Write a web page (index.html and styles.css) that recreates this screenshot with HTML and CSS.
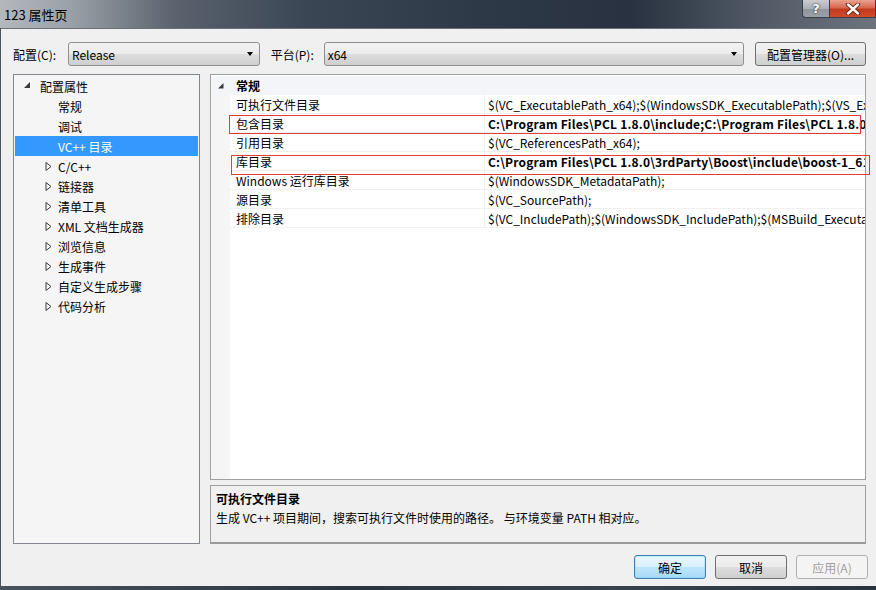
FILE: index.html
```html
<!DOCTYPE html>
<html lang="zh-CN">

<head>
    <meta charset="UTF-8">
    <title>123 属性页</title>
    <link rel="stylesheet" href="styles.css">
</head>

<body>
    <div class="window">
        <!-- Judul jendela -->
        <div class="titlebar">
            <span class="title">123 属性页</span>
            <div class="caption-btns">
                <div class="cap-btn help">?</div>
                <div class="cap-btn close">
                    <svg width="16" height="12" viewBox="0 0 16 12">
                        <path d="M3 1.5 L13 10.5 M13 1.5 L3 10.5" stroke="#5a1f14" stroke-width="4.2" stroke-linecap="round" />
                        <path d="M3 1.5 L13 10.5 M13 1.5 L3 10.5" stroke="#ffffff" stroke-width="2.4" stroke-linecap="round" />
                    </svg>
                </div>
            </div>
        </div>

        <div class="client">
            <div class="config-row">
                <span class="lbl lbl-config">配置(C):</span>
                <div class="combo combo-config">
                    <span>Release</span>
                    <span class="arrow"></span>
                </div>
                <span class="lbl lbl-platform">平台(P):</span>
                <div class="combo combo-platform">
                    <span>x64</span>
                    <span class="arrow"></span>
                </div>
                <button class="btn btn-manager">配置管理器(O)...</button>
            </div>

            <div class="main">
                <!-- Pohon navigasi -->
                <div class="tree">
                    <div class="node root">
                        <svg class="exp" width="7" height="7" viewBox="0 0 7 7"><polygon points="6,0 6,6 0,6" fill="#3c3c3c" /></svg>
                        <span>配置属性</span>
                    </div>
                    <div class="node child">常规</div>
                    <div class="node child">调试</div>
                    <div class="node child selected">VC++ 目录</div>
                    <div class="node child"><svg class="col" width="7" height="9" viewBox="0 0 7 9"><polygon points="1,0.5 6,4.5 1,8.5" fill="none" stroke="#3c3c3c" /></svg>C/C++</div>
                    <div class="node child"><svg class="col" width="7" height="9" viewBox="0 0 7 9"><polygon points="1,0.5 6,4.5 1,8.5" fill="none" stroke="#3c3c3c" /></svg>链接器</div>
                    <div class="node child"><svg class="col" width="7" height="9" viewBox="0 0 7 9"><polygon points="1,0.5 6,4.5 1,8.5" fill="none" stroke="#3c3c3c" /></svg>清单工具</div>
                    <div class="node child"><svg class="col" width="7" height="9" viewBox="0 0 7 9"><polygon points="1,0.5 6,4.5 1,8.5" fill="none" stroke="#3c3c3c" /></svg>XML 文档生成器</div>
                    <div class="node child"><svg class="col" width="7" height="9" viewBox="0 0 7 9"><polygon points="1,0.5 6,4.5 1,8.5" fill="none" stroke="#3c3c3c" /></svg>浏览信息</div>
                    <div class="node child"><svg class="col" width="7" height="9" viewBox="0 0 7 9"><polygon points="1,0.5 6,4.5 1,8.5" fill="none" stroke="#3c3c3c" /></svg>生成事件</div>
                    <div class="node child"><svg class="col" width="7" height="9" viewBox="0 0 7 9"><polygon points="1,0.5 6,4.5 1,8.5" fill="none" stroke="#3c3c3c" /></svg>自定义生成步骤</div>
                    <div class="node child"><svg class="col" width="7" height="9" viewBox="0 0 7 9"><polygon points="1,0.5 6,4.5 1,8.5" fill="none" stroke="#3c3c3c" /></svg>代码分析</div>
                </div>

                <div class="right">
                    <!-- Tabel properti -->
                    <div class="grid">
                        <div class="row category">
                            <div class="margin"><svg width="6" height="6" viewBox="0 0 6 6"><polygon points="5.5,0 5.5,5.5 0,5.5" fill="#3c3c3c" /></svg></div>
                            <div class="cat-name">常规</div>
                        </div>
                        <div class="row">
                            <div class="margin"></div>
                            <div class="name">可执行文件目录</div>
                            <div class="value">$(VC_ExecutablePath_x64);$(WindowsSDK_ExecutablePath);$(VS_ExecutablePath);$(MSBuild_ExecutablePath);$(SystemRoot)\SysWow64;$(FxCopDir);$(PATH);</div>
                        </div>
                        <div class="row">
                            <div class="margin"></div>
                            <div class="name">包含目录</div>
                            <div class="value bold">C:\Program Files\PCL 1.8.0\include;C:\Program Files\PCL 1.8.0\3rdParty\Eigen\eigen3;$(IncludePath)</div>
                        </div>
                        <div class="row">
                            <div class="margin"></div>
                            <div class="name">引用目录</div>
                            <div class="value">$(VC_ReferencesPath_x64);</div>
                        </div>
                        <div class="row">
                            <div class="margin"></div>
                            <div class="name">库目录</div>
                            <div class="value bold">C:\Program Files\PCL 1.8.0\3rdParty\Boost\include\boost-1_61;$(LibraryPath)</div>
                        </div>
                        <div class="row">
                            <div class="margin"></div>
                            <div class="name">Windows 运行库目录</div>
                            <div class="value">$(WindowsSDK_MetadataPath);</div>
                        </div>
                        <div class="row">
                            <div class="margin"></div>
                            <div class="name">源目录</div>
                            <div class="value">$(VC_SourcePath);</div>
                        </div>
                        <div class="row">
                            <div class="margin"></div>
                            <div class="name">排除目录</div>
                            <div class="value">$(VC_IncludePath);$(WindowsSDK_IncludePath);$(MSBuild_ExecutablePath);$(VC_LibraryPath_x64);</div>
                        </div>
                        <div class="grid-fill">
                            <div class="margin"></div>
                        </div>

                        <!-- Kotak merah penanda -->
                        <div class="mark mark-include"></div>
                        <div class="mark mark-lib"></div>
                    </div>

                    <div class="desc">
                        <div class="desc-title">可执行文件目录</div>
                        <div class="desc-text">生成 VC++ 项目期间，搜索可执行文件时使用的路径。 与环境变量 PATH 相对应。</div>
                    </div>
                </div>
            </div>

            <div class="buttons">
                <button class="btn btn-default">确定</button>
                <button class="btn">取消</button>
                <button class="btn btn-disabled">应用(A)</button>
            </div>
        </div>
    </div>
</body>

</html>
```

FILE: styles.css
```css
/* Dasar halaman */
body {
    margin: 0;
    padding: 0;
    font-family: "Noto Sans CJK SC", "Noto Sans", sans-serif;
    font-size: 12px;
    color: #000;
}

.window {
    width: 876px;
    height: 590px;
    background: linear-gradient(90deg, #4a525c 0%, #2c3440 40%, #3a424c 70%, #2b323b 100%);
    overflow: hidden;
}

/* Judul jendela */
.titlebar {
    height: 28px;
    display: flex;
    justify-content: space-between;
    align-items: flex-start;
    background: linear-gradient(90deg, #b4b8bd 0%, #9ba1a8 8%, #59626d 20%, #3b4655 35%, #2e3947 55%, #283240 72%, #4f5864 86%, #6d747e 100%);
}

.title {
    padding: 5px 0 0 4px;
    font-size: 13px;
    color: #000;
}

.caption-btns {
    display: flex;
    margin-right: 0;
}

.cap-btn {
    height: 18px;
    border: 1px solid #3a3f46;
    border-top: none;
    display: flex;
    align-items: center;
    justify-content: center;
    box-sizing: border-box;
}

.cap-btn.help {
    width: 28px;
    border-radius: 0 0 0 4px;
    background: linear-gradient(180deg, #c9cdd1 0%, #aab0b6 50%, #8e959c 51%, #9aa1a8 100%);
    color: #fff;
    font-weight: bold;
    font-family: "DejaVu Sans", sans-serif;
    font-size: 13px;
    text-shadow: 0 0 2px #333, 0 0 1px #333;
}

.cap-btn.close {
    width: 46px;
    border-left: none;
    background: linear-gradient(180deg, #e9a28f 0%, #d7694f 45%, #c23a1f 55%, #d04c2c 100%);
}

/* Area isi */
.client {
    margin-left: 1px;
    height: 558px;
    background-color: #f0f0f0;
    border-top: 1px solid #6c7178;
    box-sizing: border-box;
    padding: 13px 10px 0 12px;
}

.config-row {
    display: flex;
    align-items: center;
    height: 24px;
}

.lbl {
    color: #000;
}

.lbl-config {
    width: 55px;
}

.lbl-platform {
    width: 53px;
    margin-left: 11px;
}

.combo {
    height: 24px;
    box-sizing: border-box;
    border: 1px solid #8e8f8f;
    border-radius: 3px;
    background: linear-gradient(180deg, #f2f2f2 0%, #ebebeb 50%, #dddddd 51%, #cfcfcf 100%);
    display: flex;
    align-items: center;
    justify-content: space-between;
    padding: 0 6px 0 3px;
}

.combo-config {
    width: 192px;
}

.combo-platform {
    width: 421px;
}

.arrow {
    width: 0;
    height: 0;
    border-left: 3.5px solid transparent;
    border-right: 3.5px solid transparent;
    border-top: 4px solid #000;
}

/* Tombol gaya Windows 7 */
.btn {
    height: 24px;
    width: 72px;
    box-sizing: border-box;
    border: 1px solid #707070;
    border-radius: 3px;
    background: linear-gradient(180deg, #f2f2f2 0%, #ebebeb 50%, #dddddd 51%, #cfcfcf 100%);
    font-family: "Noto Sans CJK SC", "Noto Sans", sans-serif;
    font-size: 12px;
    color: #000;
    padding: 0;
}

.btn-manager {
    width: 111px;
    margin-left: 11px;
}

.btn-default {
    border-color: #3c7fb1;
    background: linear-gradient(180deg, #eaf6fd 0%, #d9f0fc 50%, #bee6fd 51%, #a7d9f5 100%);
    box-shadow: inset 0 0 0 1px #48d5fa40;
}

.btn-disabled {
    border-color: #adb2b5;
    background: #f4f4f4;
    color: #a0a0a0;
}

/* Tata letak utama */
.main {
    display: flex;
    margin-top: 8px;
    height: 470px;
}

.tree {
    width: 187px;
    box-sizing: border-box;
    border: 1px solid #828790;
    background-color: #f5f5f5;
    padding: 1px 1px;
}

.node {
    height: 20px;
    display: flex;
    align-items: center;
    white-space: nowrap;
}

.node.root {
    padding-left: 9px;
}

.node.root .exp {
    margin-right: 9px;
    margin-top: -1px;
}

.node.child {
    padding-left: 43px;
}

.node.child .col {
    margin-left: -13px;
    margin-right: 6px;
}

.node.selected {
    background-color: #3399ff;
    color: #fff;
}

.right {
    margin-left: 10px;
    width: 656px;
    display: flex;
    flex-direction: column;
}

/* Tabel properti */
.grid {
    position: relative;
    height: 407px;
    box-sizing: border-box;
    border: 1px solid #a0a0a0;
    background-color: #fff;
    display: flex;
    flex-direction: column;
    padding-top: 1px;
}

.row {
    display: flex;
    height: 19px;
    flex-shrink: 0;
}

.margin {
    width: 19px;
    flex-shrink: 0;
    background-color: #f5f5f5;
    display: flex;
    align-items: center;
    justify-content: center;
}

.row.category {
    background-color: #f3f5f8;
}

.row.category .margin {
    background-color: #f3f5f8;
}

.cat-name {
    font-weight: bold;
    padding-left: 6px;
    line-height: 19px;
}

.name {
    width: 248px;
    flex-shrink: 0;
    padding-left: 6px;
    line-height: 19px;
    border-bottom: 1px solid #f0f0f0;
    border-right: 1px solid #f0f0f0;
    white-space: nowrap;
    box-sizing: content-box;
    height: 18px;
    overflow: hidden;
}

.value {
    flex: 1;
    padding-left: 3px;
    line-height: 19px;
    height: 18px;
    border-bottom: 1px solid #f0f0f0;
    white-space: nowrap;
    overflow: hidden;
}

.value.bold {
    font-weight: bold;
    letter-spacing: 0.2px;
}

.grid-fill {
    flex: 1;
    display: flex;
}

.mark {
    position: absolute;
    border: 1px solid #e43b3b;
}

.mark-include {
    left: 18px;
    top: 40px;
    width: 630px;
    height: 17px;
}

.mark-lib {
    left: 20px;
    top: 80px;
    width: 637px;
    height: 18px;
}

/* Panel deskripsi */
.desc {
    margin-top: 5px;
    height: 59px;
    box-sizing: border-box;
    border: 1px solid #a0a0a0;
    border-bottom: 2px solid #9a9a9a;
    background-color: #f0f0f0;
    padding: 3px 5px;
}

.desc-title {
    font-weight: bold;
    line-height: 19px;
}

.desc-text {
    line-height: 19px;
}

/* Tombol bawah */
.buttons {
    display: flex;
    justify-content: flex-end;
    gap: 9px;
    margin-top: 11px;
    margin-right: -2px;
}
```
